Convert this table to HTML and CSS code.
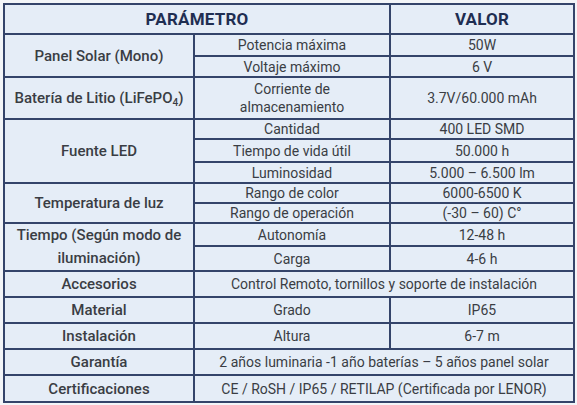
FILE: index.html
```html
<!DOCTYPE html>
<html lang="es">
<head>
<meta charset="utf-8">
<title>Parámetros</title>
<link rel="stylesheet" href="styles.css">
</head>
<body>
<table class="spec">
  <colgroup>
    <col class="c1"><col class="c2"><col class="c3">
  </colgroup>
  <thead>
    <tr class="h30">
      <th colspan="2">PARÁMETRO</th>
      <th>VALOR</th>
    </tr>
  </thead>
  <tbody>
    <tr class="h22"><td class="p" rowspan="2">Panel Solar (Mono)</td><td>Potencia máxima</td><td>50W</td></tr>
    <tr class="h21"><td>Voltaje máximo</td><td>6 V</td></tr>
    <tr class="h42"><td class="p">Batería de Litio (LiFePO<sub>4</sub>)</td><td class="two">Corriente de<br>almacenamiento</td><td>3.7V/60.000 mAh</td></tr>
    <tr class="h20"><td class="p" rowspan="3">Fuente LED</td><td>Cantidad</td><td>400 LED SMD</td></tr>
    <tr class="h23"><td>Tiempo de vida útil</td><td>50.000 h</td></tr>
    <tr class="h21"><td>Luminosidad</td><td>5.000 – 6.500 lm</td></tr>
    <tr class="h20"><td class="p" rowspan="2">Temperatura de luz</td><td>Rango de color</td><td>6000-6500 K</td></tr>
    <tr class="h20"><td>Rango de operación</td><td>(-30 – 60) C°</td></tr>
    <tr class="h23"><td class="p two" rowspan="2">Tiempo (Según modo de<br>iluminación)</td><td>Autonomía</td><td>12-48 h</td></tr>
    <tr class="h24"><td>Carga</td><td>4-6 h</td></tr>
    <tr class="h26"><td class="p">Accesorios</td><td colspan="2">Control Remoto, tornillos y soporte de instalación</td></tr>
    <tr class="h26"><td class="p">Material</td><td>Grado</td><td>IP65</td></tr>
    <tr class="h26"><td class="p">Instalación</td><td>Altura</td><td>6-7 m</td></tr>
    <tr class="h26"><td class="p">Garantía</td><td colspan="2">2 años luminaria -1 año baterías – 5 años panel solar</td></tr>
    <tr class="h27"><td class="p">Certificaciones</td><td colspan="2">CE / RoSH / IP65 / RETILAP (Certificada por LENOR)</td></tr>
  </tbody>
</table>
</body>
</html>
```
FILE: styles.css
```css
html, body {
  margin: 0;
  padding: 0;
  background: #f3f5f8;
}
body {
  padding: 3px 0 0 3px;
  font-family: Roboto, "Liberation Sans", sans-serif;
}
.spec {
  border-collapse: collapse;
  table-layout: fixed;
  width: 570px;
  background: #e5edf7;
  color: #3a3d44;
  border: 2px solid #3c4b6a;
}
.c1 { width: 190px; }
.c2 { width: 196px; }
.c3 { width: 184px; }
.spec th, .spec td {
  border: 2px solid #34446a;
  padding: 0;
  text-align: center;
  vertical-align: middle;
  white-space: nowrap;
  font-size: 14px;
  line-height: 16px;
}
.spec th {
  font-size: 17px;
  font-weight: 700;
  color: #1f2e52;
  letter-spacing: 0.2px;
}
.spec td.p {
  font-size: 15px;
  font-weight: 500;
}
.spec td.two { line-height: 18px; }
.spec td.p.two { line-height: 23px; }
.spec sub {
  font-size: 10px;
  line-height: 0;
  vertical-align: -3px;
}
.h20 { height: 20px; }
.h21 { height: 21px; }
.h22 { height: 22px; }
.h23 { height: 23px; }
.h24 { height: 24px; }
.h26 { height: 26px; }
.h27 { height: 27px; }
.h30 { height: 30px; }
.h42 { height: 42px; }
```
